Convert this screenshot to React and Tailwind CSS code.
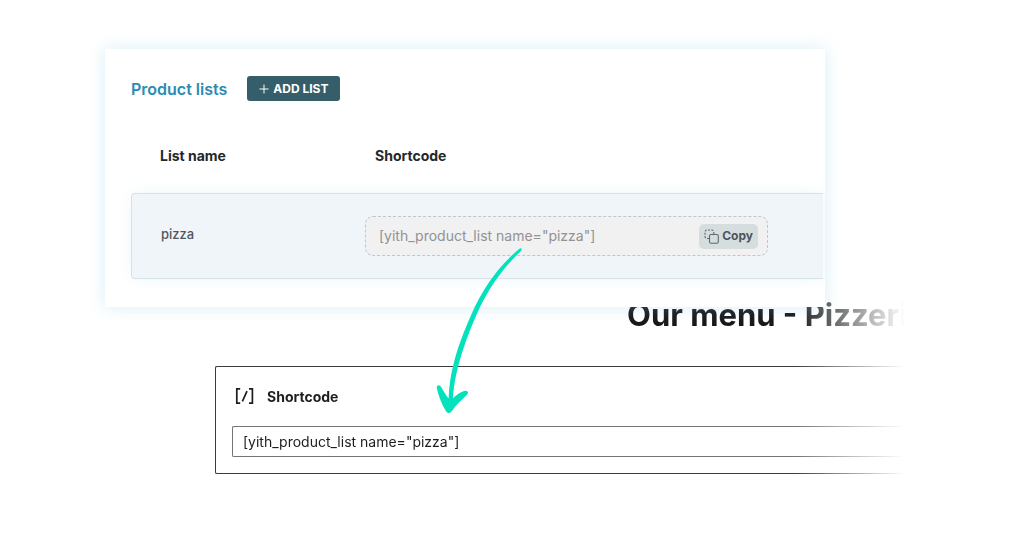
import React, { useState } from 'react';

const lists = [{ name: 'pizza', shortcode: '[yith_product_list name="pizza"]' }];

function CopyIcon() {
    return (
        <svg width="15" height="15" viewBox="0 0 15 15" fill="none" stroke="#5d6a6e" strokeWidth="1.1" aria-hidden="true">
            <path d="M5 9.5H3A2 2 0 0 1 1 7.5V3A2 2 0 0 1 3 1H8A2 2 0 0 1 9.8 3V5" strokeDasharray="2 1.3" />
            <rect x="5.5" y="5.5" width="8.8" height="8.8" rx="1.5" />
        </svg>
    );
}

function Arrow() {
    return (
        <svg
            className="absolute left-[420px] top-[240px] pointer-events-none"
            width="120"
            height="180"
            viewBox="0 0 120 180"
            fill="#04e2bd"
            aria-hidden="true"
        >
            <path d="M99.5 8.8C78 26 62 50 52 73C44 91 37.5 108 33.5 124C30.5 136 29 147 28.6 158.5C26 155.5 23.5 150.5 20.8 146.5C19 144.2 16.2 145.4 16.8 148.3C19 157 22 165 26 171.2C27.5 173.6 30.3 173.5 32 171C36 165 41.5 160 47 154.8C49.3 152 47.2 149.8 44 151C40 152.5 36 155 33 158.3C33.4 148 35.2 138 38.2 126C42.4 110 48.5 93 56.4 75C67 51 81 30 101 11C102.5 9.4 101.2 7.5 99.5 8.8Z" />
        </svg>
    );
}

function ProductLists() {
    const [copied, setCopied] = useState('');

    const handleCopy = (shortcode) => {
        navigator.clipboard?.writeText(shortcode);
        setCopied(shortcode);
    };

    return (
        <section className="relative z-10 ml-[105px] mr-[199px] overflow-hidden bg-white pb-7 pl-[26px] pr-0.5 pt-[27px] shadow-[0_0_16px_rgba(140,205,230,0.35)]">
            <div className="flex items-center gap-5">
                <h2 className="text-[16px] font-semibold leading-5 text-[#2b8bb3]">Product lists</h2>
                <button
                    type="button"
                    className="flex h-[25px] items-center gap-1 rounded-[3px] bg-[#365d6a] px-3 text-[12px] font-bold text-white"
                >
                    <svg width="10" height="10" viewBox="0 0 10 10" stroke="white" aria-hidden="true">
                        <path d="M5 .5v9M.5 5h9" />
                    </svg>
                    ADD LIST
                </button>
            </div>
            <table className="mt-9 w-full table-fixed border-separate border-spacing-0 text-left">
                <thead>
                    <tr className="text-[14px] leading-5 text-[#23282d]">
                        <th className="w-[234px] pb-[27px] pl-[29px] pt-[9px] font-bold">List name</th>
                        <th className="pb-[27px] pl-[10px] pt-[9px] font-bold">Shortcode</th>
                    </tr>
                </thead>
                <tbody>
                    {lists.map((list) => (
                        <tr key={list.name} className="rounded-[4px] shadow-[0_0_16px_rgba(160,200,225,0.16)]">
                            <td className="rounded-l-[4px] border-y border-l border-[#d5e2e8] bg-[#f0f5fa] pb-0.5 pl-[29px] text-[13px] font-medium text-[#50575c]">
                                {list.name}
                            </td>
                            <td className="border-y border-[#d5e2e8] bg-[#f0f5fa] py-[22px]">
                                <div className="mr-[55px] flex h-10 items-center rounded-lg border border-dashed border-[#c3c6c8] bg-[#f1f1f1] pl-[13px] pr-[9px]">
                                    <input
                                        readOnly
                                        aria-label="Shortcode"
                                        value={list.shortcode}
                                        className="min-w-0 flex-1 bg-transparent text-[14px] leading-5 text-[#909294] outline-none"
                                    />
                                    <button
                                        type="button"
                                        onClick={() => handleCopy(list.shortcode)}
                                        className="flex h-[25px] items-center gap-[3px] rounded-[5px] bg-[#d6dddf] px-[5px] text-[12px] font-bold text-[#4d555b]"
                                    >
                                        <CopyIcon />
                                        {copied === list.shortcode ? 'Copied' : 'Copy'}
                                    </button>
                                </div>
                            </td>
                        </tr>
                    ))}
                </tbody>
            </table>
        </section>
    );
}

function MenuEditor() {
    return (
        <section className="-mt-3 ml-[215px] mr-[114px] [mask-image:linear-gradient(to_right,black_calc(100%-115px),transparent_calc(100%-5px))]">
            <h1 className="ml-[412px] whitespace-nowrap text-[31px] font-bold leading-10 text-[#17181a]">
                Our menu - Pizzeria
            </h1>
            <div className="mt-[31px] rounded-l-[2px] border-y border-l border-[#3c3c3c] pb-4 pl-4 pt-5">
                <label htmlFor="shortcode" className="flex items-center gap-3 pl-[3px] text-[14px] font-bold leading-5 text-[#1e1e1e]">
                    <svg width="20" height="20" viewBox="0 0 20 20" fill="none" stroke="#1e1e1e" strokeWidth="1.7" aria-hidden="true">
                        <path d="M5.2 1.8H1.8v14.4h3.4M14 1.8h3.4v14.4H14M12 4.2L7.4 14.4" />
                    </svg>
                    Shortcode
                </label>
                <input
                    id="shortcode"
                    defaultValue={lists[0].shortcode}
                    className="mt-[19px] block h-[31px] w-full rounded-l-[2px] border-y border-l border-[#757575] bg-white pl-[10px] text-[14px] text-[#1e1e1e] outline-none"
                />
            </div>
        </section>
    );
}

export default function App() {
    return (
        <main className="relative min-h-screen overflow-hidden bg-white pt-[49px] font-['Inter',sans-serif]">
            <ProductLists />
            <MenuEditor />
            <div className="absolute inset-0 z-20 pointer-events-none">
                <Arrow />
            </div>
        </main>
    );
}
